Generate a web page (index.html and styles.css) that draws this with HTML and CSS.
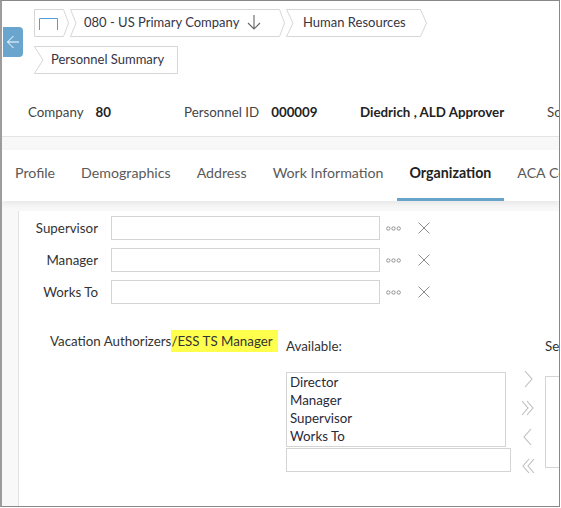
FILE: index.html
```
<!DOCTYPE html>
<html lang="en">
<head>
<meta charset="utf-8">
<title>Personnel Summary - Organization</title>
<link rel="stylesheet" href="styles.css">
</head>
<body>
<div class="frame">
  <button class="back" aria-label="Back">
    <svg width="14" height="16" viewBox="0 0 14 16"><path d="M13 8H1.5M7.5 2L1.5 8l6 6" fill="none" stroke="#fff" stroke-width="1"/></svg>
  </button>

  <header class="top">
    <nav class="crumbs">
      <div class="crumb crumb-home">
        <svg class="crumb-bg" width="35" height="28" viewBox="0 0 35 28"><polygon points="0.5,0.5 29.5,0.5 34.5,14 29.5,27.5 0.5,27.5" fill="#fff" stroke="#d6d6d6"/></svg>
        <svg class="home-icon" width="19" height="12" viewBox="0 0 19 12"><path d="M0.5 12V0.5H18.5V12" fill="none" stroke="#5b9bd5" stroke-width="1"/></svg>
      </div>
      <div class="crumb crumb-company">
        <svg class="crumb-bg" width="215" height="28" viewBox="0 0 215 28"><polygon points="0.5,0.5 209.5,0.5 214.5,14 209.5,27.5 0.5,27.5 6,14" fill="#fff" stroke="#d6d6d6"/></svg>
        <span class="crumb-text">080 - US Primary Company</span>
        <svg class="down" width="14" height="16" viewBox="0 0 14 16"><path d="M7 1v14M1 9l6 6 6-6" fill="none" stroke="#666" stroke-width="1.1"/></svg>
      </div>
      <div class="crumb crumb-hr">
        <svg class="crumb-bg" width="141" height="28" viewBox="0 0 141 28"><polygon points="0.5,0.5 134.5,0.5 140.5,14 134.5,27.5 0.5,27.5 7,14" fill="#fff" stroke="#d6d6d6"/></svg>
        <span class="crumb-text">Human Resources</span>
      </div>
    </nav>
    <nav class="crumbs crumbs-2">
      <div class="crumb crumb-ps">
        <svg class="crumb-bg" width="144" height="28" viewBox="0 0 144 28"><polygon points="0.5,0.5 143.5,0.5 143.5,27.5 0.5,27.5 9,14" fill="#fff" stroke="#d6d6d6"/></svg>
        <span class="crumb-text">Personnel Summary</span>
      </div>
    </nav>

    <div class="info">
      <div class="info-group"><span class="info-label">Company</span><span class="info-value">80</span></div>
      <div class="info-group"><span class="info-label">Personnel ID</span><span class="info-value">000009</span></div>
      <div class="info-group"><span class="info-value">Diedrich , ALD Approver</span></div>
      <div class="info-group"><span class="info-label">Social Security</span></div>
    </div>
  </header>

  <div class="tabs">
    <div class="tab">Profile</div>
    <div class="tab">Demographics</div>
    <div class="tab">Address</div>
    <div class="tab">Work Information</div>
    <div class="tab active">Organization</div>
    <div class="tab">ACA Coverage</div>
  </div>

  <div class="body">
    <main class="panel">
      <div class="field-row">
        <label class="field-label">Supervisor</label>
        <div class="field-input"></div>
        <svg class="dots" width="15" height="5" viewBox="0 0 15 5"><circle cx="2.3" cy="2.5" r="1.7"/><circle cx="7.5" cy="2.5" r="1.7"/><circle cx="12.7" cy="2.5" r="1.7"/></svg>
        <svg class="clear" width="12" height="12" viewBox="0 0 12 12"><path d="M0.5 0.5l11 11M11.5 0.5l-11 11"/></svg>
      </div>
      <div class="field-row">
        <label class="field-label">Manager</label>
        <div class="field-input"></div>
        <svg class="dots" width="15" height="5" viewBox="0 0 15 5"><circle cx="2.3" cy="2.5" r="1.7"/><circle cx="7.5" cy="2.5" r="1.7"/><circle cx="12.7" cy="2.5" r="1.7"/></svg>
        <svg class="clear" width="12" height="12" viewBox="0 0 12 12"><path d="M0.5 0.5l11 11M11.5 0.5l-11 11"/></svg>
      </div>
      <div class="field-row">
        <label class="field-label">Works To</label>
        <div class="field-input"></div>
        <svg class="dots" width="15" height="5" viewBox="0 0 15 5"><circle cx="2.3" cy="2.5" r="1.7"/><circle cx="7.5" cy="2.5" r="1.7"/><circle cx="12.7" cy="2.5" r="1.7"/></svg>
        <svg class="clear" width="12" height="12" viewBox="0 0 12 12"><path d="M0.5 0.5l11 11M11.5 0.5l-11 11"/></svg>
      </div>

      <div class="dual">
        <div class="dual-label">Vacation Authorizers<span class="hl">/ESS TS Manager</span></div>
        <div class="dual-col available">
          <div class="col-title">Available:</div>
          <div class="listbox">
            <div class="item">Director</div>
            <div class="item">Manager</div>
            <div class="item">Supervisor</div>
            <div class="item">Works To</div>
          </div>
          <div class="filter"></div>
        </div>
        <div class="movers">
          <div class="mover"><svg width="12" height="18" viewBox="0 0 12 18"><path d="M3 1l7 8-7 8"/></svg></div>
          <div class="mover"><svg width="16" height="18" viewBox="0 0 16 18"><path d="M2 2l6 7-6 7M7 2l6 7-6 7"/></svg></div>
          <div class="mover"><svg width="12" height="18" viewBox="0 0 12 18"><path d="M9 1L2 9l7 8"/></svg></div>
          <div class="mover"><svg width="16" height="18" viewBox="0 0 16 18"><path d="M9 2L3 9l6 7M14 2L8 9l6 7"/></svg></div>
        </div>
        <div class="dual-col selected">
          <div class="col-title">Selected:</div>
          <div class="selbox"></div>
        </div>
      </div>
    </main>
  </div>
</div>
</body>
</html>
```

FILE: styles.css
```
* { box-sizing: border-box; }

html, body {
  margin: 0;
  padding: 0;
  background: #fff;
}

body {
  font-family: Lato, "Open Sans", "Liberation Sans", sans-serif;
  font-size: 13.33px;
  color: #333;
}

.frame {
  position: relative;
  width: 560px;
  height: 507px;
  border: 1px solid #888;
  border-left: 2px solid #9c9c9c;
  background: #f8f8f8;
  overflow: hidden;
  display: flex;
  flex-direction: column;
}

.back {
  position: absolute;
  left: 1px;
  top: 26px;
  width: 20px;
  height: 30px;
  padding: 0;
  border: 0;
  border-radius: 0 4px 4px 0;
  background: #6aa5cd;
  display: flex;
  align-items: center;
  justify-content: center;
}

.top {
  background: #fff;
  padding: 8px 0 0 32px;
  flex-shrink: 0;
}

.crumbs {
  display: flex;
  height: 28px;
}

.crumbs-2 {
  margin-top: 9px;
}

.crumb {
  position: relative;
  height: 28px;
  display: flex;
  align-items: center;
  flex-shrink: 0;
  font-size: 13px;
  color: #353545;
  white-space: nowrap;
}

.crumb-bg {
  position: absolute;
  left: 0;
  top: 0;
}

.crumb-text, .down, .home-icon {
  position: relative;
}

.crumb-text {
  padding-bottom: 2px;
}

.crumb-home {
  width: 35px;
  padding-left: 5px;
  padding-top: 1px;
}

.crumb-company {
  width: 215px;
  margin-left: 1px;
  padding-left: 14px;
}

.down {
  margin-left: 8px;
  top: -1px;
}

.crumb-hr {
  width: 141px;
  margin-left: 1px;
  padding-left: 17px;
}

.crumb-ps {
  width: 144px;
  padding-left: 17px;
}

.info {
  margin: 14px 0 0 -32px;
  height: 49px;
  border-bottom: 1px solid #e4e4e4;
  padding-left: 26px;
  display: grid;
  grid-template-columns: 156px 176px 187px 100px;
  align-items: center;
  white-space: nowrap;
  overflow: hidden;
}

.info-group {
  display: flex;
  align-items: center;
}

.info-label {
  color: #444;
  margin-right: 12px;
}

.info-value {
  font-weight: bold;
  color: #222;
}

.tabs {
  margin-top: 13px;
  height: 51px;
  background: #fff;
  display: flex;
  white-space: nowrap;
  box-shadow: 0 3px 6px rgba(0, 0, 0, 0.07);
  position: relative;
  flex-shrink: 0;
}

.tab {
  padding: 0 13px 3px;
  display: flex;
  align-items: center;
  font-size: 14.2px;
  color: #5a5a5a;
  border-bottom: 3px solid transparent;
  flex-shrink: 0;
}

.tab.active {
  font-weight: bold;
  color: #222;
  border-bottom-color: #68a3c9;
}

.body {
  flex: 1;
  padding: 10px 0 0 16px;
  display: flex;
}

.panel {
  flex: 1;
  background: #fff;
  border-left: 1px solid #e2e2e2;
  padding-top: 5px;
}

.field-row {
  display: flex;
  align-items: center;
  height: 24px;
  margin-bottom: 8px;
}

.field-label {
  width: 79px;
  text-align: right;
  color: #333;
  margin-right: 13px;
  padding-bottom: 1px;
}

.field-input {
  width: 269px;
  height: 24px;
  border: 1px solid #d4d4d4;
  background: #fff;
}

.dots {
  margin-left: 6px;
  fill: none;
  stroke: #8a8a8a;
  stroke-width: 0.9;
}

.clear {
  margin-left: 17px;
  fill: none;
  stroke: #8a8a8a;
  stroke-width: 1;
}

.dual {
  margin-top: 26px;
  display: flex;
  align-items: flex-start;
  white-space: nowrap;
}

.dual-label {
  width: 267px;
  flex-shrink: 0;
  padding-left: 31px;
  line-height: 22px;
  color: #333;
}

.hl {
  display: inline-block;
  background: #ffff4d;
  height: 22px;
  padding-right: 5px;
}

.dual-col {
  flex-shrink: 0;
  padding-top: 7px;
}

.available {
  width: 225px;
}

.col-title {
  line-height: 18px;
  color: #333;
}

.listbox {
  margin-top: 17px;
  width: 220px;
  height: 75px;
  border: 1px solid #d4d4d4;
  padding-left: 3px;
}

.item {
  line-height: 18px;
  color: #2a2a3a;
}

.filter {
  margin-top: 1px;
  width: 225px;
  height: 24px;
  border: 1px solid #d4d4d4;
}

.movers {
  width: 34px;
  flex-shrink: 0;
  margin-top: 34px;
  display: flex;
  flex-direction: column;
}

.mover {
  height: 29px;
  display: flex;
  align-items: center;
  justify-content: center;
}

.mover svg {
  fill: none;
  stroke: #bdbdbd;
  stroke-width: 1.1;
}

.selected {
  width: 200px;
}

.selbox {
  margin-top: 21px;
  width: 200px;
  height: 92px;
  border: 1px solid #d4d4d4;
}
```
